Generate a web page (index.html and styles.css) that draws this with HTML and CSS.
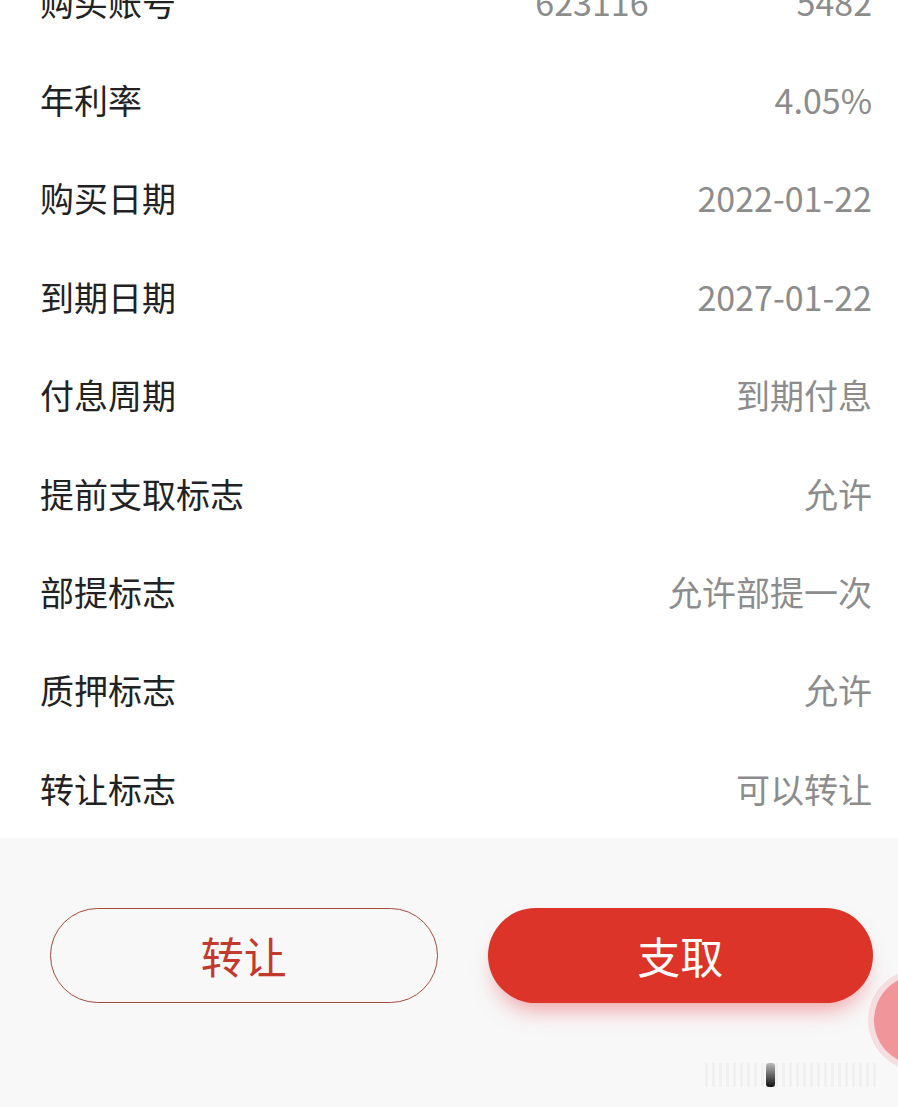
FILE: index.html
```html
<!DOCTYPE html>
<html lang="zh-CN">
<head>
    <meta charset="UTF-8">
    <meta name="viewport" content="width=device-width, initial-scale=1.0">
    <title>定期详情</title>
    <link rel="stylesheet" href="styles.css">
</head>
<body>
    <div class="page">
        <div class="detail-list">
            <div class="row">
                <span class="label">购买账号</span>
                <span class="value account"><span>623116</span><span>5482</span></span>
            </div>
            <div class="row">
                <span class="label">年利率</span>
                <span class="value">4.05%</span>
            </div>
            <div class="row">
                <span class="label">购买日期</span>
                <span class="value">2022-01-22</span>
            </div>
            <div class="row">
                <span class="label">到期日期</span>
                <span class="value">2027-01-22</span>
            </div>
            <div class="row">
                <span class="label">付息周期</span>
                <span class="value">到期付息</span>
            </div>
            <div class="row">
                <span class="label">提前支取标志</span>
                <span class="value">允许</span>
            </div>
            <div class="row">
                <span class="label">部提标志</span>
                <span class="value">允许部提一次</span>
            </div>
            <div class="row">
                <span class="label">质押标志</span>
                <span class="value">允许</span>
            </div>
            <div class="row">
                <span class="label">转让标志</span>
                <span class="value">可以转让</span>
            </div>
        </div>
        <div class="footer">
            <div class="actions">
                <button type="button" class="btn btn-outline">转让</button>
                <button type="button" class="btn btn-primary">支取</button>
            </div>
            <div class="float-ball"></div>
            <div class="home-bar"><span class="grip"></span></div>
        </div>
    </div>
</body>
</html>
```

FILE: styles.css
```css
:root {
    --text-color: #222222;
    --value-color: #8c8c8c;
    --footer-bg: #f8f8f8;
    --red: #dc3428;
    --red-dark: #a24a40;
}

html, body {
    margin: 0;
    padding: 0;
}

body {
    font-family: "Noto Sans CJK SC", "Noto Sans", sans-serif;
    background-color: var(--footer-bg);
    color: var(--text-color);
    width: 898px;
    height: 1107px;
    overflow: hidden;
}

.page {
    margin-top: -48px;
}

.detail-list {
    background-color: #ffffff;
    padding: 0 26px 0 40px;
}

.row {
    height: 98.4px;
    display: flex;
    align-items: center;
    justify-content: space-between;
}

.label {
    font-size: 34px;
    color: var(--text-color);
}

.value {
    font-size: 34px;
    color: var(--value-color);
}

.account {
    display: flex;
    gap: 148px;
}

.footer {
    position: relative;
    height: 300px;
    overflow: hidden;
}

.actions {
    display: flex;
    gap: 50px;
    padding: 70px 25px 0 50px;
}

.btn {
    flex: 1;
    height: 95px;
    border-radius: 48px;
    font-family: inherit;
    font-size: 43px;
    cursor: pointer;
}

.btn-outline {
    background-color: transparent;
    border: 1.5px solid var(--red-dark);
    color: #c23a2e;
}

.btn-primary {
    background-color: var(--red);
    border: none;
    color: #ffffff;
    box-shadow: 0 14px 22px -8px rgba(232, 80, 90, 0.55);
}

.float-ball {
    position: absolute;
    left: 874px;
    top: 137px;
    width: 90px;
    height: 90px;
    border-radius: 50%;
    background-color: #f0969b;
    box-shadow: 0 0 0 6px rgba(245, 190, 195, 0.45);
}

.home-bar {
    position: absolute;
    left: 705px;
    top: 225px;
    width: 175px;
    height: 24px;
    background: repeating-linear-gradient(90deg, rgba(0, 0, 0, 0.03) 0 3px, transparent 3px 7px);
}

.grip {
    position: absolute;
    left: 61px;
    top: 0;
    width: 9px;
    height: 24px;
    border-radius: 3px;
    background: linear-gradient(#bbbbbb, #111111);
}
```
